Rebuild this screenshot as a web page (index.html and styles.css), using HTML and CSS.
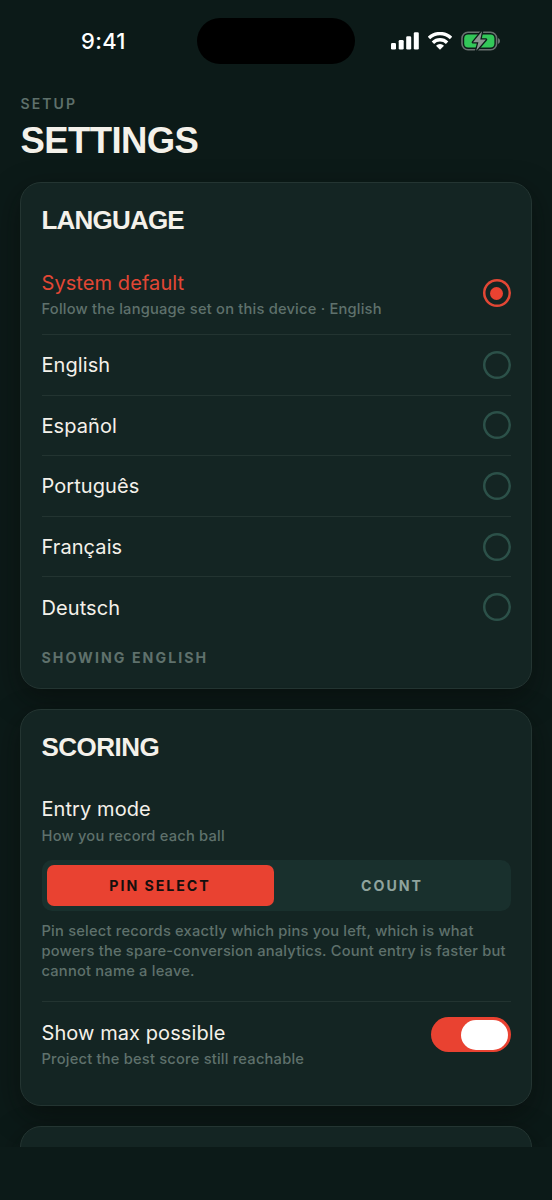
FILE: index.html
```
<!DOCTYPE html>
<html lang="en">
<head>
<meta charset="utf-8">
<title>Settings</title>
<link rel="stylesheet" href="styles.css">
</head>
<body>
<div class="screen">
  <header class="status">
    <span class="time">9:41</span>
    <span class="island"></span>
    <span class="indicators">
      <svg class="signal" viewBox="0 0 28 18" width="28" height="18" fill="#fff"><rect x="0" y="11" width="5" height="6.5" rx="1.3"/><rect x="7.7" y="8" width="5" height="9.5" rx="1.3"/><rect x="15.2" y="4.2" width="5" height="13.3" rx="1.3"/><rect x="22.8" y="0.3" width="5" height="17.2" rx="1.3"/></svg>
      <svg class="wifi" viewBox="0 0 24 18" width="24" height="18" fill="none" stroke="#fff" stroke-width="3.4"><path d="M1 6A15.8 15.8 0 0 1 23 6"/><path d="M4.9 10.7A10.2 10.2 0 0 1 19.1 10.7"/><path d="M12 17.8L8 13.8A5.6 5.6 0 0 1 16 13.8Z" fill="#fff" stroke="none"/></svg>
      <svg class="battery" viewBox="0 0 40 20" width="40" height="20"><rect x="1" y="1.2" width="34.6" height="17.6" rx="6" fill="none" stroke="#68716f" stroke-width="1.6"/><path d="M37 7.2v5.6c1.3-.3 2-1.4 2-2.8s-.7-2.5-2-2.8z" fill="#68716f"/><rect x="3.2" y="3.4" width="30.2" height="13.2" rx="4" fill="#33c759"/><path d="M21 .2L12 11.2h5.4L15.2 19.8 24.9 8.6h-5.6z" fill="#8c9491" stroke="#0d1b19" stroke-width="2.6" stroke-linejoin="round" paint-order="stroke"/></svg>
    </span>
  </header>
  <main class="content">
    <p class="eyebrow">SETUP</p>
    <h1 class="title">SETTINGS</h1>
    <section class="card language">
      <h2 class="heading">LANGUAGE</h2>
      <div class="row first"><div class="copy"><p class="label selected">System default</p><p class="hint">Follow the language set on this device · English</p></div><span class="radio on"></span></div>
      <div class="row"><p class="label">English</p><span class="radio"></span></div>
      <div class="row"><p class="label">Español</p><span class="radio"></span></div>
      <div class="row"><p class="label">Português</p><span class="radio"></span></div>
      <div class="row"><p class="label">Français</p><span class="radio"></span></div>
      <div class="row"><p class="label">Deutsch</p><span class="radio"></span></div>
      <p class="showing">SHOWING ENGLISH</p>
    </section>
    <section class="card scoring">
      <h2 class="heading">SCORING</h2>
      <div class="entry">
        <p class="label">Entry mode</p>
        <p class="hint">How you record each ball</p>
        <div class="segments"><span class="segment active">PIN SELECT</span><span class="segment">COUNT</span></div>
        <p class="note">Pin select records exactly which pins you left, which is what<br>powers the spare-conversion analytics. Count entry is faster but<br>cannot name a leave.</p>
      </div>
      <div class="maximum"><div class="copy"><p class="label">Show max possible</p><p class="hint">Project the best score still reachable</p></div><span class="toggle"><span class="knob"></span></span></div>
    </section>
    <section class="card next"></section>
  </main>
</div>
</body>
</html>
```

FILE: styles.css
```
* { box-sizing: border-box; margin: 0; padding: 0; }
body { background: #0c1a18; }
.screen {
  width: 552px; height: 1200px; overflow: hidden;
  background: #0c1a18; color: #f4f1ea; font-family: Inter, sans-serif;
}
.status {
  height: 82px; padding-top: 18px;
  display: grid; grid-template-columns: 197px 158px 197px; align-items: center; align-content: start;
}
.time { padding-left: 81px; font-size: 22px; line-height: 46px; font-weight: 500; letter-spacing: .3px; color: #fff; }
.island { height: 46px; border-radius: 23px; background: #000; }
.indicators { display: flex; align-items: center; padding-left: 36px; }
.wifi { margin-left: 9px; }
.battery { margin-left: 9px; }
.content { height: 1065px; padding: 12px 20px 0; overflow: hidden; }
.eyebrow { height: 20px; padding-left: .5px; font-size: 14px; line-height: 19px; font-weight: 600; letter-spacing: 2.1px; color: #5e706b; }
.title {
  height: 48px; margin-top: 2px; padding: 1px 0 0 .5px; font-family: "Liberation Sans", sans-serif;
  font-size: 36.5px; line-height: 48px; font-weight: 700; letter-spacing: -.6px;
}
.card {
  border: 1px solid #243532; border-radius: 21px; background: #142523;
  padding: 0 20.5px; box-shadow: 0 10px 28px rgba(8, 10, 8, .5);
}
.language { height: 507px; margin-top: 18px; }
.scoring { height: 397px; margin-top: 20px; }
.next { height: 120px; margin-top: 20px; }
.heading {
  padding-top: 21px; height: 67px; font-family: "Liberation Sans", sans-serif;
  font-size: 26px; line-height: 32px; font-weight: 700; letter-spacing: -.7px;
}
.language .heading { letter-spacing: -.8px; }
.scoring .heading { letter-spacing: -.5px; }
.row { height: 60.6px; display: flex; align-items: center; justify-content: space-between; border-top: 1px solid #233431; }
.row.first { height: 84px; padding-top: 2px; border-top: 0; }
.row.first .copy { padding-top: 2px; }
.row .label { padding-top: 1px; }
.label { font-size: 20px; line-height: 28px; font-weight: 430; letter-spacing: .08px; }
.label.selected { color: #e24735; }
.hint { font-size: 14.7px; line-height: 22px; margin-top: 1px; font-weight: 450; color: #5f716c; letter-spacing: .2px; }
.radio { width: 28px; height: 28px; box-shadow: inset 0 0 0 2.5px #2c5149; border-radius: 50%; display: grid; place-items: center; }
.radio.on { box-shadow: inset 0 0 0 2.5px #e24735; }
.radio.on::before { content: ""; width: 13px; height: 13px; border-radius: 50%; background: #eb4231; }
.showing { margin-top: 10px; font-size: 14.2px; line-height: 21px; font-weight: 650; letter-spacing: 2.05px; color: #5f716c; }
.entry { height: 225px; padding-top: 18px; border-bottom: 1px solid #233431; }
.entry .hint { margin-top: 2px; }
.segments { height: 51px; margin-top: 13px; padding: 5px; border-radius: 10px; background: #19302d; display: grid; grid-template-columns: 1fr 1fr; gap: 5px; }
.segment { display: grid; place-items: center; border-radius: 7px; font-size: 14.2px; font-weight: 700; letter-spacing: 1.95px; color: #8fa39d; }
.segment.active { background: #e94231; color: #160f0d; }
.note { margin-top: 10px; font-size: 14.7px; line-height: 20px; font-weight: 450; letter-spacing: .2px; color: #5f716c; white-space: nowrap; }
.maximum { padding-top: 15px; display: flex; justify-content: space-between; align-items: flex-start; }
.maximum .copy { padding-top: 2px; }
.toggle { width: 80px; height: 35px; border-radius: 18px; background: #e94231; display: flex; align-items: center; justify-content: flex-end; padding-right: 3px; }
.knob { width: 47px; height: 30px; border-radius: 15px; background: #fff; }
```
